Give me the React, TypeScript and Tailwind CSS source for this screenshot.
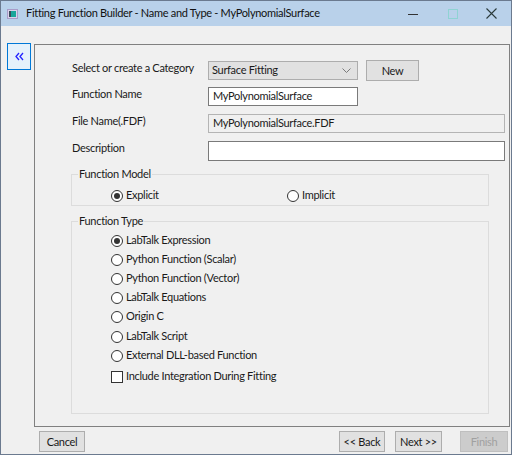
import React from "react";

const font = { fontFamily: "Lato, 'Liberation Sans', sans-serif" };

function Radio({ checked, label, className = "" }: { checked?: boolean; label: string; className?: string }) {
  return (
    <div className={`flex items-center h-[19px] ${className}`}>
      <span className="w-[12px] h-[12px] rounded-full border border-[#333333] bg-white flex items-center justify-center shrink-0">
        {checked && <span className="w-[6px] h-[6px] rounded-full bg-[#333333]" />}
      </span>
      <span className="ml-[3px] whitespace-nowrap">{label}</span>
    </div>
  );
}

function WinButton({ label, disabled, className = "" }: { label: string; disabled?: boolean; className?: string }) {
  return (
    <button
      className={`h-[21px] border leading-none flex items-center justify-center ${
        disabled ? "bg-[#cccccc] border-[#bfbfbf] text-[#a0a0a0]" : "bg-[#e1e1e1] border-[#adadad] text-[#1a1a1a]"
      } ${className}`}
    >
      {label}
    </button>
  );
}

export default function App() {
  const types = [
    { t: "LabTalk Expression", c: "mt-[1px]" },
    { t: "Python Function (Scalar)", c: "" },
    { t: "Python Function (Vector)", c: "" },
    { t: "LabTalk Equations", c: "" },
    { t: "Origin C", c: "" },
    { t: "LabTalk Script", c: "mt-[1px]" },
    { t: "External DLL-based Function", c: "" },
  ];

  return (
    <div
      style={font}
      className="w-[512px] h-[455px] border border-[#6b7a8f] bg-[#f0f0f0] flex flex-col text-[11px] tracking-[-0.3px] text-[#1a1a1a] overflow-hidden"
    >
      {/* title bar */}
      <div className="h-[25px] bg-[#b9d1ea] flex items-center shrink-0">
        <svg className="ml-[6px]" width="11" height="10" viewBox="0 0 11 10">
          <rect x="0.5" y="0.5" width="10" height="9" fill="#d9d2ea" stroke="#a89cc8" />
          <rect x="2" y="2" width="2" height="6" fill="#3a4a5a" />
          <rect x="4" y="2" width="5" height="6" fill="#1aa59a" />
        </svg>
        <span className="ml-[8px] text-[#111111]">Fitting Function Builder - Name and Type - MyPolynomialSurface</span>
        <div className="flex-1" />
        <svg width="10" height="10" viewBox="0 0 10 10" className="mr-[30px]">
          <line x1="0" y1="5.5" x2="10" y2="5.5" stroke="#333333" strokeWidth="1" />
        </svg>
        <svg width="10" height="10" viewBox="0 0 10 10" className="mr-[28px]">
          <rect x="0.5" y="0.5" width="9" height="9" fill="none" stroke="#8fd3d3" strokeWidth="1" />
        </svg>
        <svg width="11" height="11" viewBox="0 0 11 11" className="mr-[14px]">
          <path d="M0.5 0.5 L10.5 10.5 M10.5 0.5 L0.5 10.5" stroke="#2b3b3b" strokeWidth="1.1" />
        </svg>
      </div>

      {/* body */}
      <div className="flex flex-1">
        <div className="ml-[6px] mt-[17px] w-[24px] h-[27px] border border-[#0078d7] bg-[#e5f1fb] flex items-center justify-center shrink-0">
          <svg width="9" height="9" viewBox="0 0 9 9">
            <path d="M4 1 L1 4.5 L4 8 M8 1 L5 4.5 L8 8" fill="none" stroke="#2323ff" strokeWidth="1.3" />
          </svg>
        </div>

        <div className="ml-[3px] flex flex-col">
          <div className="mt-[18px] w-[476px] h-[383px] border border-[#808080] flex flex-col">
            {/* fields */}
            <div className="mt-[16px] ml-[37px] flex flex-col">
              <div className="flex items-center h-[19px]">
                <span className="w-[136px] whitespace-nowrap mb-[5px]">Select or create a Category</span>
                <div className="w-[150px] h-[19px] bg-[#e1e1e1] border border-[#adadad] flex items-center px-[3px]">
                  <span className="flex-1">Surface Fitting</span>
                  <svg width="9" height="5" viewBox="0 0 9 5" className="mr-[3px]">
                    <path d="M0.5 0.5 L4.5 4.5 L8.5 0.5" fill="none" stroke="#7a7a7a" />
                  </svg>
                </div>
                <WinButton label="New" className="ml-[8px] w-[53px] h-[19px]" />
              </div>
              <div className="flex items-center h-[19px] mt-[7px]">
                <span className="w-[136px] mb-[5px]">Function Name</span>
                <div className="w-[150px] h-[19px] bg-white border border-[#7a7a7a] flex items-center px-[4px]">
                  MyPolynomialSurface
                </div>
              </div>
              <div className="flex items-center h-[19px] mt-[8px]">
                <span className="w-[136px] mb-[4px]">File Name(.FDF)</span>
                <div className="w-[297px] h-[19px] bg-[#f0f0f0] border border-[#b4b4b4] flex items-center px-[4px]">
                  MyPolynomialSurface.FDF
                </div>
              </div>
              <div className="flex items-center h-[20px] mt-[8px]">
                <span className="w-[136px] mb-[5px]">Description</span>
                <div className="w-[297px] h-[20px] bg-white border border-[#7a7a7a]" />
              </div>
            </div>

            {/* function model */}
            <fieldset className="ml-[36px] mt-[6px] w-[418px] h-[39px] border border-[#dcdcdc] px-0">
              <legend className="ml-[6px] px-[1px] leading-[14px]">Function Model</legend>
              <div className="flex items-center mt-[5px] ml-[39px]">
                <div className="w-[176px]">
                  <Radio checked label="Explicit" />
                </div>
                <Radio label="Implicit" />
              </div>
            </fieldset>

            {/* function type */}
            <fieldset className="ml-[36px] mt-[8px] w-[418px] h-[200px] border border-[#dcdcdc] px-0">
              <legend className="ml-[6px] px-[1px] leading-[14px]">Function Type</legend>
              <div className="flex flex-col ml-[39px] mt-[2px]">
                {types.map((x, i) => (
                  <Radio key={x.t} checked={i === 0} label={x.t} className={x.c} />
                ))}
                <div className="flex items-center h-[19px] mt-[2px]">
                  <span className="w-[12px] h-[12px] border border-[#333333] bg-white" />
                  <span className="ml-[3px]">Include Integration During Fitting</span>
                </div>
              </div>
            </fieldset>
          </div>

          {/* buttons */}
          <div className="flex mt-[4px]">
            <WinButton label="Cancel" className="ml-[5px] w-[46px]" />
            <div className="flex-1" />
            <WinButton label="<< Back" className="w-[46px]" />
            <WinButton label="Next >>" className="ml-[10px] w-[47px]" />
            <WinButton label="Finish" disabled className="ml-[18px] w-[48px] mr-[2px]" />
          </div>
        </div>
      </div>
    </div>
  );
}
